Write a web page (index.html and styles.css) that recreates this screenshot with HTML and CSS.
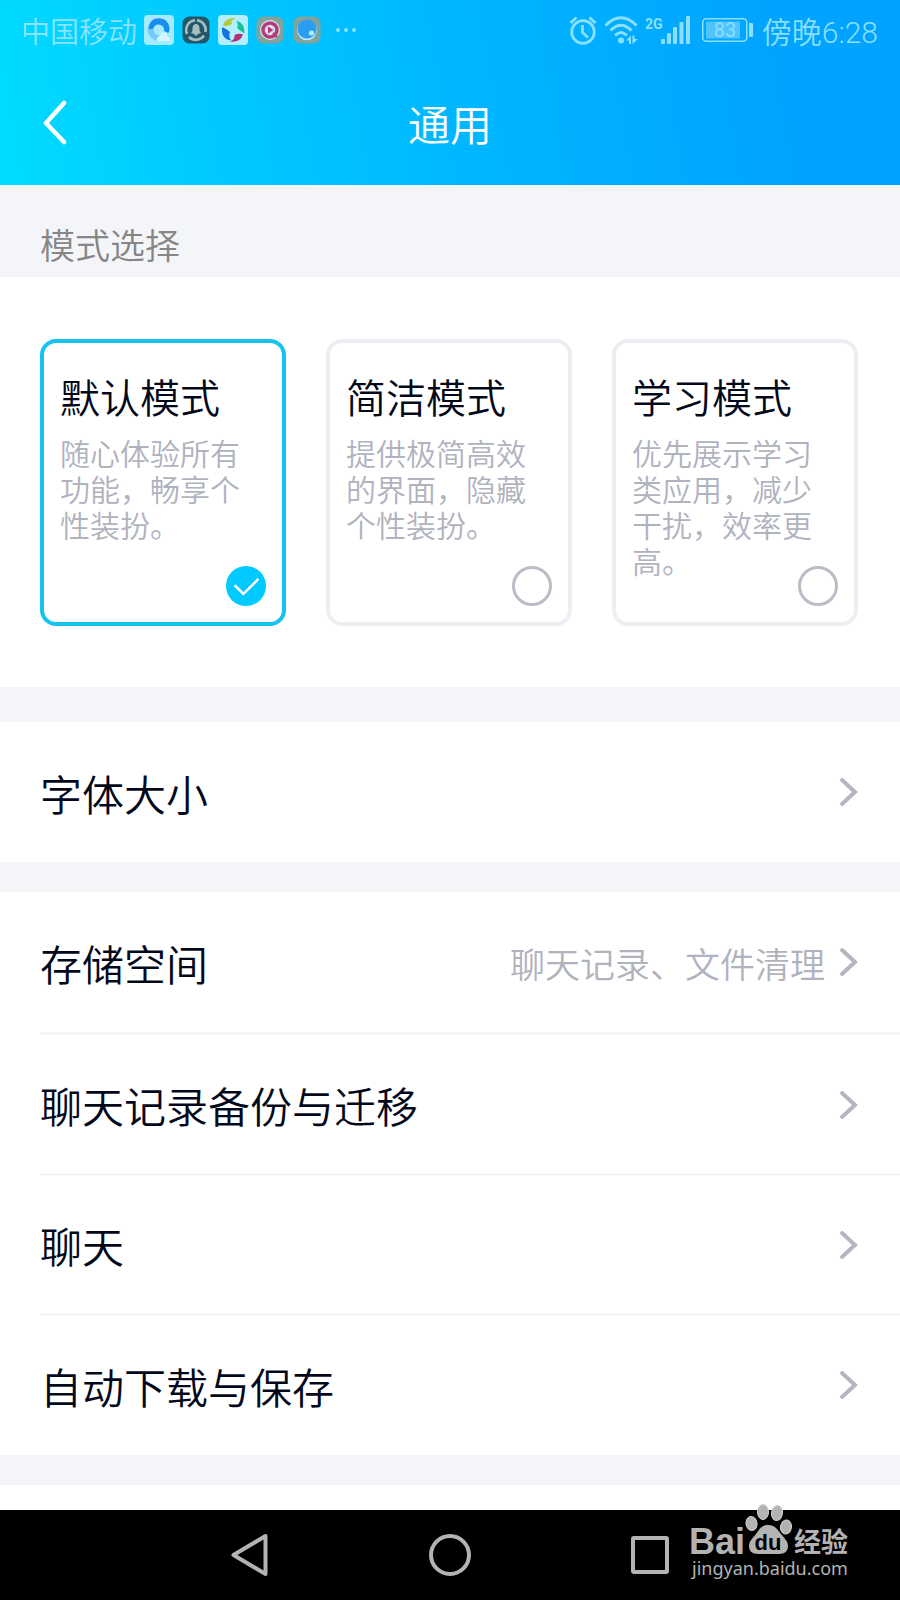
FILE: index.html
```html
<!DOCTYPE html>
<html lang="zh-CN">
<head>
<meta charset="utf-8">
<meta name="viewport" content="width=device-width, initial-scale=1">
<title>通用</title>
<link rel="stylesheet" href="styles.css">
</head>
<body>
<header class="top">
  <div class="status">
    <span class="carrier">中国移动</span>
    <div class="apps">
      <svg class="app" viewBox="0 0 30 30" aria-hidden="true">
        <rect width="30" height="30" rx="4" fill="#a5eaff"/>
        <path d="M5 17A10.500 10.500 0 1 1 24.500 18L20 16A5.500 5.500 0 1 0 10 18Z" fill="#188df0"/>
        <path d="M3.500 14A12 12 0 0 0 15 26L18 20A6 6 0 0 1 9.500 14Z" fill="#74c9fb"/>
        <path d="M13 26q-1-4 3-5 1-5 5-3.500 2.500 1 2 3.500 4 1 2.500 5z" fill="#d5f5ff"/>
      </svg>
      <svg class="app" viewBox="0 0 30 30" aria-hidden="true">
        <rect x="1.500" y="1.500" width="27" height="27" rx="7" fill="#20576a"/>
        <g fill="none" stroke="#a6bfbe" stroke-width="2.600">
          <path d="M6 19A9.800 9.800 0 0 1 14 5.300"/><path d="M16 5.300A9.800 9.800 0 0 1 24.500 17"/><path d="M23 20.500A9.800 9.800 0 0 1 8 22"/>
        </g>
        <path d="M10 18q2-2 1.500-5 .5-4 3.500-4t3.500 4q-.5 3 1.500 5l-3 1-2 2-2-2z" fill="#a6bfbe"/>
      </svg>
      <svg class="app" viewBox="0 0 30 30" aria-hidden="true">
        <rect width="30" height="30" rx="4" fill="#b2f0ff"/>
        <path d="M5 10.500Q7 2 18 3Q12 5 14 9Q9 12 5 10.500Z" fill="#b6c83a"/>
        <path d="M18 5.500Q27 8 26.500 18Q25 18 19 13Q21 9 18 5.500Z" fill="#16c29b"/>
        <path d="M25 19.500Q22 28 12 26.500Q17 25 16.500 20Q21 18 25 19.500Z" fill="#b42f76"/>
        <path d="M13 25.500Q3 24 4 12.500Q6 12 12 17Q10 21 13 25.500Z" fill="#1474df"/>
      </svg>
      <svg class="app" viewBox="0 0 30 30" aria-hidden="true">
        <rect x="1.500" y="1.500" width="27" height="27" rx="7" fill="#7fa39d"/>
        <circle cx="15" cy="15" r="10" fill="#d6e4ea"/>
        <circle cx="15" cy="15" r="7" fill="none" stroke="#b73a7c" stroke-width="3.500"/>
        <path d="M13 11.500l5.500 3.500-5.500 3.500z" fill="#b73a7c"/>
        <path d="M18 18l4 4" stroke="#b73a7c" stroke-width="2.500"/>
      </svg>
      <svg class="app" viewBox="0 0 30 30" aria-hidden="true">
        <rect x="1.500" y="1.500" width="27" height="27" rx="7" fill="#7fa39d"/>
        <circle cx="15" cy="15.500" r="9.800" fill="#b6ecff"/>
        <circle cx="15" cy="14" r="9.500" fill="#2b9df0"/>
        <circle cx="19.500" cy="18" r="2.600" fill="#b6ecff"/>
      </svg>
      <svg class="more" viewBox="0 0 20 30" fill="#8de2ff" aria-hidden="true">
        <circle cx="2" cy="15" r="2"/><circle cx="10" cy="15" r="2"/><circle cx="18" cy="15" r="2"/>
      </svg>
    </div>
    <div class="signals">
      <svg class="alarm" viewBox="0 0 28 30" aria-hidden="true">
        <g fill="none" stroke="#8bdfff" stroke-width="2.800">
          <circle cx="14" cy="17" r="11.300"/>
          <path d="M13.500 10v7.500l5.500 5"/>
          <path d="M1.500 8l6-5.500M26.500 8l-6-5.500"/>
        </g>
      </svg>
      <svg class="wifi" viewBox="0 0 34 30" aria-hidden="true">
        <g fill="none" stroke="#8bdfff" stroke-width="3">
          <path d="M1.500 10.500Q17-5 32.500 10.500"/>
          <path d="M6.500 15.500Q17 5 27.500 15.500"/>
          <path d="M11 20.500Q17 14.500 23 20.500"/>
        </g>
        <circle cx="17" cy="25.500" r="3" fill="#8bdfff"/>
        <path d="M22 25.500l5-5V29h-2v-3.500zM28.500 20.500h2V24H34l-5.500 5z" fill="#8bdfff"/>
      </svg>
      <svg class="cell" viewBox="0 0 44 30" fill="#8bdfff" aria-hidden="true">
        <text class="net" x="-1" y="14">2G</text>
        <rect x="15" y="24" width="4" height="5" rx="1"/>
        <rect x="21" y="18" width="4" height="11" rx="1"/>
        <rect x="27" y="12" width="4" height="17" rx="1"/>
        <rect x="33.500" y="7" width="4" height="22" rx="1"/>
        <rect x="40" y="1" width="4" height="28" rx="1"/>
      </svg>
      <svg class="battery" viewBox="0 0 51 30" aria-hidden="true">
        <rect x=".75" y="3.750" width="44" height="22.500" rx="3.500" fill="none" stroke="#8bdfff" stroke-width="1.500"/>
        <rect x="4" y="6.500" width="34" height="17" fill="#51c4ff"/>
        <rect x="47" y="8" width="4" height="14" rx="1" fill="#8bdfff"/>
        <text class="charge" x="23" y="22" text-anchor="middle">83</text>
      </svg>
      <span class="clock">傍晚6:28</span>
    </div>
  </div>
  <div class="titlebar">
    <button class="back" type="button" aria-label="返回">
      <svg viewBox="0 0 26 46" aria-hidden="true"><path d="M22 3L4 23l18 19" fill="none" stroke="#fff" stroke-width="4.500" stroke-linecap="round" stroke-linejoin="round"/></svg>
    </button>
    <h1 class="title">通用</h1>
  </div>
</header>

<main class="settings">
  <h2 class="label" id="mode-label">模式选择</h2>
  <div class="modes" role="radiogroup" aria-labelledby="mode-label">
    <label class="mode">
      <span class="mode-name">默认模式</span>
      <span class="mode-text">随心体验所有功能，畅享个性装扮。</span>
      <input class="pick" type="radio" name="mode" checked>
    </label>
    <label class="mode">
      <span class="mode-name">简洁模式</span>
      <span class="mode-text">提供极简高效的界面，隐藏个性装扮。</span>
      <input class="pick" type="radio" name="mode">
    </label>
    <label class="mode">
      <span class="mode-name">学习模式</span>
      <span class="mode-text">优先展示学习类应用，减少干扰，效率更高。</span>
      <input class="pick" type="radio" name="mode">
    </label>
  </div>

  <nav class="group group-first">
    <a class="row" href="#font"><span class="name">字体大小</span><svg class="chevron" viewBox="0 0 20 30" aria-hidden="true"><path d="M3 3l13 12L3 27"/></svg></a>
  </nav>

  <nav class="group">
    <a class="row row-lead" href="#storage"><span class="name">存储空间</span><span class="detail">聊天记录、文件清理</span><svg class="chevron" viewBox="0 0 20 30" aria-hidden="true"><path d="M3 3l13 12L3 27"/></svg></a>
    <a class="row" href="#backup"><span class="name">聊天记录备份与迁移</span><svg class="chevron" viewBox="0 0 20 30" aria-hidden="true"><path d="M3 3l13 12L3 27"/></svg></a>
    <a class="row" href="#chat"><span class="name">聊天</span><svg class="chevron" viewBox="0 0 20 30" aria-hidden="true"><path d="M3 3l13 12L3 27"/></svg></a>
    <a class="row" href="#download"><span class="name">自动下载与保存</span><svg class="chevron" viewBox="0 0 20 30" aria-hidden="true"><path d="M3 3l13 12L3 27"/></svg></a>
  </nav>
  <div class="group group-rest"></div>
</main>

<footer class="keys">
  <button class="key" type="button" aria-label="后退"><svg viewBox="0 0 44 44" aria-hidden="true"><path d="M37.500 3v38L5.500 22z"/></svg></button>
  <button class="key" type="button" aria-label="主屏幕"><svg viewBox="0 0 44 44" aria-hidden="true"><circle cx="22" cy="22" r="19"/></svg></button>
  <button class="key" type="button" aria-label="最近任务"><svg viewBox="0 0 44 44" aria-hidden="true"><rect x="5" y="5" width="34" height="34" rx="1"/></svg></button>
  <div class="mark">
    <svg class="mark-logo" viewBox="0 0 164 84" role="img" aria-label="Baidu经验 jingyan.baidu.com">
      <g fill="#b3b3b3" stroke="#d0d0d0">
        <ellipse cx="61.500" cy="19.500" rx="5.500" ry="7" transform="rotate(-8 61.500 19.500)"/>
        <ellipse cx="73" cy="8" rx="5.500" ry="7.500"/>
        <ellipse cx="87" cy="9" rx="5.500" ry="7.500" transform="rotate(8 87 9)"/>
        <ellipse cx="96" cy="23" rx="5.500" ry="7" transform="rotate(8 96 23)"/>
      </g>
      <path d="M78 21c7 0 10 5 13 9 3 4 7 7 7 12s-3 8-9 8H68c-6 0-9-3-9-8s4-8 7-12c3-4 5-9 12-9z" fill="#b3b3b3"/>
      <text class="mark-latin" x="-1" y="50">Bai</text>
      <text class="mark-du" x="78" y="46" text-anchor="middle">du</text>
      <text class="mark-cjk" x="104" y="48">经验</text>
      <text class="mark-url" x="2" y="71">jingyan.baidu.com</text>
    </svg>
  </div>
</footer>
</body>
</html>
```
FILE: styles.css
```css
* { box-sizing: border-box; }

body {
  margin: 0;
  min-height: 100vh;
  display: flex;
  flex-direction: column;
  background: #f4f5f9;
  color: #03081a;
  font-family: Roboto, "Noto Sans CJK SC", sans-serif;
  font-weight: 350;
}

button {
  border: 0;
  padding: 0;
  background: none;
  display: flex;
  align-items: center;
  justify-content: center;
}

.top {
  background: linear-gradient(80deg, #00dcff 0%, #00c8ff 25%, #00b4ff 55%, #00a4ff 85%, #00a2ff 100%);
}

.status {
  display: flex;
  align-items: center;
  height: 60px;
  padding: 0 22px 0 21px;
  color: #8de2ff;
  font-size: 29px;
}

.apps, .signals { display: flex; align-items: center; }
.apps { gap: 7px; margin-left: 7px; }
.app { width: 30px; height: 30px; }
.more { width: 20px; height: 30px; margin-left: 7px; }
.signals { margin-left: auto; color: #8bdfff; }
.alarm { width: 28px; height: 30px; margin-right: 7px; }
.wifi { width: 34px; height: 30px; margin-right: 8px; }
.cell { width: 44px; height: 30px; margin-right: 12px; }
.battery { width: 51px; height: 30px; margin-right: 9px; }
.net { font: 700 14px Roboto, sans-serif; }
.charge { font: 400 20px Roboto, sans-serif; fill: #8bdfff; }
.clock { font-size: 30px; }

.titlebar {
  display: grid;
  grid-template-columns: 80px 1fr 80px;
  align-items: center;
  height: 125px;
}

.back { height: 80px; padding-left: 30px; }
.back svg { width: 26px; height: 46px; }

.title {
  margin: 0;
  color: #fff;
  font-size: 42px;
  font-weight: 350;
  text-align: center;
}

.settings {
  flex: 1;
  display: flex;
  flex-direction: column;
}

.label {
  margin: 0;
  padding: 37px 40px 3px;
  color: #868686;
  font-size: 35px;
  font-weight: 350;
  line-height: 52px;
}

.modes {
  display: grid;
  grid-template-columns: repeat(3, 1fr);
  gap: 40px;
  padding: 62px 42px 61px 40px;
  background: #fff;
}

.mode {
  display: grid;
  grid-template-rows: 48px 1fr;
  row-gap: 13px;
  min-height: 287px;
  padding: 33px 16px 16px;
  border: 4px solid #eceef4;
  border-radius: 16px;
}

.mode:has(.pick:checked) { border-color: #16c3ef; }

.mode-name { grid-area: 1 / 1; font-size: 40px; line-height: 48px; }
.mode-text { grid-area: 2 / 1; color: #b0b2be; font-size: 30px; line-height: 36px; }

.pick {
  grid-area: 1 / 1 / 3 / 2;
  place-self: end;
  appearance: none;
  width: 40px;
  height: 40px;
  margin: 0;
  border: 3px solid #bbbcc6;
  border-radius: 50%;
}

.pick:checked {
  display: grid;
  place-items: center;
  border: 0;
  background: #00caff;
}

.pick:checked::before {
  content: "";
  width: 20px;
  height: 11px;
  border: solid #fff;
  border-width: 0 0 3px 3px;
  border-radius: 1px;
  transform: translateY(-3px) rotate(-45deg);
}

.group { margin-top: 30px; background: #fff; }
.group-first { margin-top: 35px; }
.group-rest { flex: 1; min-height: 25px; }

.row {
  display: flex;
  align-items: center;
  min-height: 140px;
  margin-left: 40px;
  padding-right: 41px;
  color: inherit;
  text-decoration: none;
}

.row:not(:last-child) { border-bottom: 1px solid #ededef; }
.row-lead:not(:last-child) { min-height: 143px; border-bottom: 3px solid #f6f6f8; }

.name { flex: 1; font-size: 42px; }
.detail { color: #b0b2be; font-size: 35px; }

.chevron {
  width: 20px;
  height: 30px;
  margin-left: 14px;
  fill: none;
  stroke: #b3b5c1;
  stroke-width: 4px;
  stroke-linecap: round;
}

.keys {
  position: relative;
  display: flex;
  justify-content: center;
  height: 90px;
  background: #000;
}

.key { width: 200px; }

.key svg {
  width: 44px;
  height: 44px;
  fill: none;
  stroke: #b3b3b3;
  stroke-width: 4px;
  stroke-linejoin: round;
}

/* site mark laid over the key bar */
.mark {
  position: absolute;
  right: 46px;
  bottom: 12px;
}

.mark-logo { display: block; width: 164px; height: 84px; }
.mark-latin { font: 700 36px "Liberation Sans", sans-serif; fill: #b3b3b3; }
.mark-du { font: 700 22px "Liberation Sans", sans-serif; fill: #000; }
.mark-cjk { font: 700 27px "Noto Sans CJK SC", sans-serif; fill: #b3b3b3; }
.mark-url { font: 400 18px "Noto Sans", sans-serif; fill: #b3b3b3; }
```
